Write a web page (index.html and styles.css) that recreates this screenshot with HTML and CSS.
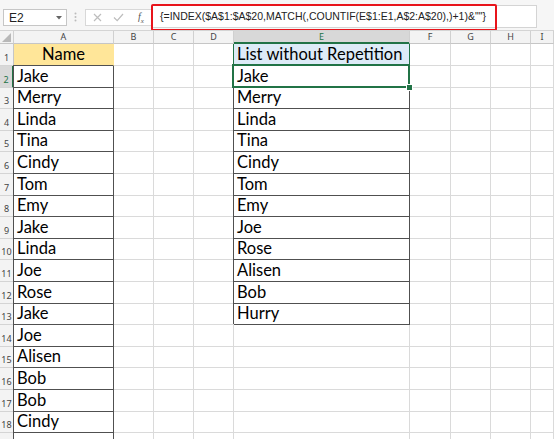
FILE: index.html
```html
<!DOCTYPE html>
<html>
<head>
<meta charset="utf-8">
<link rel="stylesheet" href="styles.css">
</head>
<body>
<div class="fbar">
  <div class="namebox"><span>E2</span><svg class="dd" width="6" height="4" viewBox="0 0 6 4"><path d="M0 0h6L3 3.5z" fill="#666"/></svg></div>
  <svg class="grip" width="3" height="10" viewBox="0 0 3 10"><circle cx="1.5" cy="1.5" r="1" fill="#bbb"/><circle cx="1.5" cy="5" r="1" fill="#bbb"/><circle cx="1.5" cy="8.5" r="1" fill="#bbb"/></svg>
  <div class="btns">
    <svg width="9" height="9" viewBox="0 0 9 9"><path d="M1 1l7 7M8 1L1 8" stroke="#bdbdbd" stroke-width="1.2"/></svg>
    <svg width="11" height="9" viewBox="0 0 11 9"><path d="M1 4.5l3.2 3.2L10 1" stroke="#bdbdbd" stroke-width="1.2" fill="none"/></svg>
    <span class="fx">f<sub>x</sub></span>
  </div>
  <div class="formula">{=INDEX($A$1:$A$20,MATCH(,COUNTIF(E$1:E1,A$2:A$20),)+1)&amp;""}</div>
  <div class="annot"></div>
</div>
<div class="sheet">
  <div class="h corner"><svg width="9" height="9" viewBox="0 0 10 10"><path d="M10 0V10H0z" fill="#b8b8b8"/></svg></div>
  <div class="h">A</div><div class="h">B</div><div class="h">C</div><div class="h">D</div><div class="h sel">E</div><div class="h">F</div><div class="h">G</div><div class="h">H</div><div class="h">I</div>

  <div class="r">1</div><div class="a1">Name</div><div></div><div></div><div></div><div class="e1">List without Repetition</div><div></div><div></div><div></div><div></div>
  <div class="r sel">2</div><div class="t">Jake</div><div></div><div></div><div></div><div class="t cur">Jake</div><div></div><div></div><div></div><div></div>
  <div class="r">3</div><div class="t">Merry</div><div></div><div></div><div></div><div class="t">Merry</div><div></div><div></div><div></div><div></div>
  <div class="r">4</div><div class="t">Linda</div><div></div><div></div><div></div><div class="t">Linda</div><div></div><div></div><div></div><div></div>
  <div class="r">5</div><div class="t">Tina</div><div></div><div></div><div></div><div class="t">Tina</div><div></div><div></div><div></div><div></div>
  <div class="r">6</div><div class="t">Cindy</div><div></div><div></div><div></div><div class="t">Cindy</div><div></div><div></div><div></div><div></div>
  <div class="r">7</div><div class="t">Tom</div><div></div><div></div><div></div><div class="t">Tom</div><div></div><div></div><div></div><div></div>
  <div class="r">8</div><div class="t">Emy</div><div></div><div></div><div></div><div class="t">Emy</div><div></div><div></div><div></div><div></div>
  <div class="r">9</div><div class="t">Jake</div><div></div><div></div><div></div><div class="t">Joe</div><div></div><div></div><div></div><div></div>
  <div class="r">10</div><div class="t">Linda</div><div></div><div></div><div></div><div class="t">Rose</div><div></div><div></div><div></div><div></div>
  <div class="r">11</div><div class="t">Joe</div><div></div><div></div><div></div><div class="t">Alisen</div><div></div><div></div><div></div><div></div>
  <div class="r">12</div><div class="t">Rose</div><div></div><div></div><div></div><div class="t">Bob</div><div></div><div></div><div></div><div></div>
  <div class="r">13</div><div class="t">Jake</div><div></div><div></div><div></div><div class="t">Hurry</div><div></div><div></div><div></div><div></div>
  <div class="r">14</div><div class="t">Joe</div><div></div><div></div><div></div><div></div><div></div><div></div><div></div><div></div>
  <div class="r">15</div><div class="t">Alisen</div><div></div><div></div><div></div><div></div><div></div><div></div><div></div><div></div>
  <div class="r">16</div><div class="t">Bob</div><div></div><div></div><div></div><div></div><div></div><div></div><div></div><div></div>
  <div class="r">17</div><div class="t">Bob</div><div></div><div></div><div></div><div></div><div></div><div></div><div></div><div></div>
  <div class="r">18</div><div class="t">Cindy</div><div></div><div></div><div></div><div></div><div></div><div></div><div></div><div></div>
  <div class="r"></div><div class="t"></div><div></div><div></div><div></div><div></div><div></div><div></div><div></div><div></div>
</div>
</body>
</html>
```

FILE: styles.css
```css
html, body {
  margin: 0;
  padding: 0;
  background: #fff;
  width: 554px;
  height: 439px;
  overflow: hidden;
}
body {
  font-family: "Lato", "Liberation Sans", sans-serif;
}
.fbar {
  position: relative;
  height: 31px;
  box-sizing: border-box;
  background: #f6f6f6;
  border-bottom: 1px solid #d4d4d4;
  display: flex;
  align-items: flex-start;
  padding-left: 3px;
  width: 554px;
  overflow: hidden;
}
.namebox {
  margin-top: 9px;
  width: 64px;
  height: 17px;
  box-sizing: border-box;
  border: 1px solid #c6c6c6;
  background: #fff;
  display: flex;
  align-items: center;
  justify-content: space-between;
  padding: 0 4px 0 5px;
  font: 12px "Liberation Sans", sans-serif;
  color: #222;
  flex: none;
}
.grip {
  margin: 12px 0 0 7px;
  flex: none;
}
.btns {
  margin: 9px 0 0 8px;
  width: 66px;
  height: 17px;
  box-sizing: border-box;
  border: 1px solid #d8d8d8;
  border-right: none;
  background: #fff;
  display: flex;
  align-items: center;
  padding-left: 7px;
  gap: 11px;
  flex: none;
}
.fx {
  font: italic 10px "Liberation Serif", serif;
  color: #555;
  margin-left: 3px;
}
.fx sub {
  font-size: 7px;
}
.formula {
  margin-top: 5px;
  width: 386px;
  height: 23px;
  box-sizing: border-box;
  border: 1px solid #d4d4d4;
  background: #fff;
  padding-left: 8px;
  font: 10.5px/21px "Liberation Sans", sans-serif;
  color: #222;
  white-space: nowrap;
  flex: none;
}
.annot {
  position: absolute;
  left: 151px;
  top: 4px;
  width: 346px;
  height: 27px;
  box-sizing: border-box;
  border: 2px solid #e8141b;
  border-radius: 2px;
}
.sheet {
  display: grid;
  grid-template-columns: 14px 100px 40px 40px 40px 176px 41px 40px 40px 23px;
  grid-template-rows: 13px 22px repeat(18, 21.6px);
  width: 554px;
  height: 408px;
  overflow: hidden;
}
.sheet > div {
  position: relative;
  box-sizing: border-box;
  border-right: 1px solid #dadada;
  border-bottom: 1px solid #dadada;
  display: flex;
  align-items: flex-end;
  padding: 0 3px 2.5px;
  font-size: 16.5px;
  line-height: 1;
  color: #000;
  white-space: nowrap;
  min-width: 0;
}
.sheet > .h {
  background: #f3f3f3;
  border-right-color: #d0d0d0;
  border-bottom-color: #c6c6c6;
  font: 9px/12px "Noto Sans", sans-serif;
  color: #444;
  justify-content: center;
  align-items: center;
  padding: 0;
}
.sheet > .corner {
  justify-content: flex-end;
  align-items: flex-end;
  padding: 0 2px 1px 0;
}
.sheet > .h.sel {
  background: #d8d8d8;
  color: #217346;
  border-bottom-color: #217346;
  box-shadow: inset 0 -1px 0 #217346;
}
.sheet > .r {
  background: #f3f3f3;
  border-right-color: #c6c6c6;
  border-bottom-color: #d4d4d4;
  font: 9px/1 "Noto Sans", sans-serif;
  color: #444;
  justify-content: center;
  padding: 0 0 3px;
}
.sheet > .r.sel {
  background: #d8d8d8;
  color: #217346;
  border-right: 2px solid #217346;
}
.sheet > .a1 {
  background: #ffe699;
  border-right-color: transparent;
  border-bottom-color: #505050;
  justify-content: center;
}
.sheet > .e1 {
  background: #ddebf7;
  border-right-color: #217346;
  border-bottom-color: #505050;
  box-shadow: -1px 0 0 #217346;
}
.sheet > .t {
  border-right-color: #505050;
  border-bottom-color: #505050;
  box-shadow: -1px -1px 0 #505050;
}
.sheet > .cur {
  z-index: 2;
}
.cur::after {
  content: "";
  position: absolute;
  left: -2px;
  top: -2px;
  right: -1px;
  bottom: -1px;
  border: 2px solid #217346;
}
.cur::before {
  content: "";
  position: absolute;
  right: -4px;
  bottom: -4px;
  width: 5px;
  height: 5px;
  background: #217346;
  border: 1px solid #fff;
  z-index: 3;
}
```
